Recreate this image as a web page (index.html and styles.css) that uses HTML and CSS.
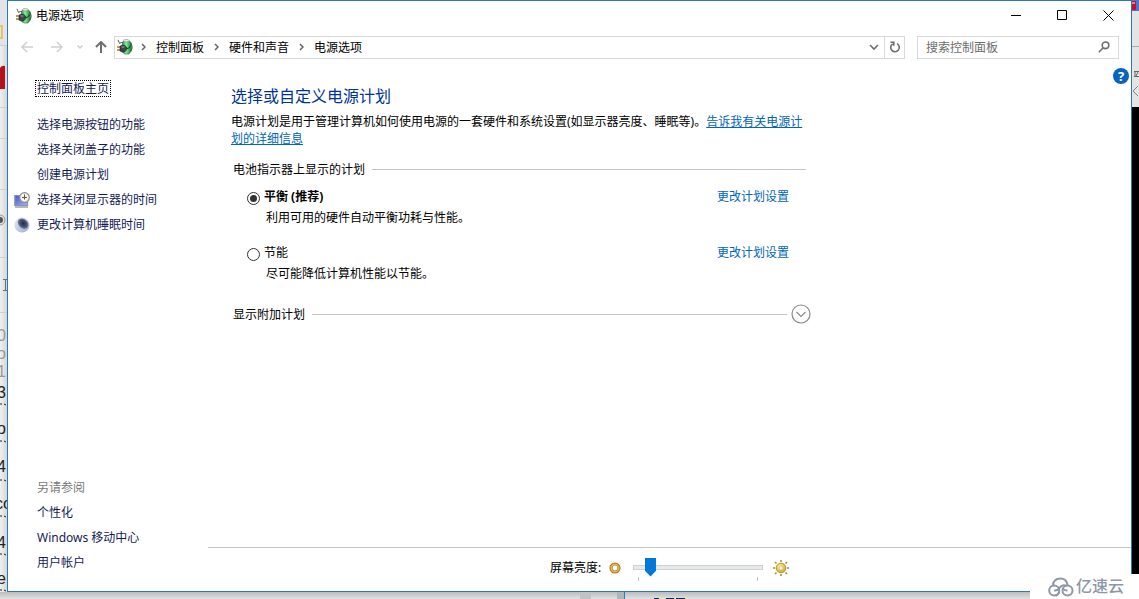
FILE: index.html
```html
<!DOCTYPE html>
<html lang="zh-CN">
<head>
<meta charset="utf-8">
<meta name="viewport" content="width=device-width, initial-scale=1">
<title>电源选项</title>
<link rel="stylesheet" href="styles.css">
</head>
<body>
<svg class="defs" aria-hidden="true">
  <defs>
    <linearGradient id="cell" x1="0" x2="1"><stop offset="0" stop-color="#2c9a4c"/><stop offset=".4" stop-color="#8df09a"/><stop offset="1" stop-color="#1c7a38"/></linearGradient>
    <linearGradient id="screen" x1="0" y1="0" x2="1" y2="1"><stop offset="0" stop-color="#4a55c8"/><stop offset="1" stop-color="#a5b4f4"/></linearGradient>
    <linearGradient id="disc" x1="0" y1="0" x2="1" y2="1"><stop offset="0" stop-color="#e6edf8"/><stop offset="1" stop-color="#9eacd0"/></linearGradient>
    <radialGradient id="moon" cx=".5" cy=".45" r=".55"><stop offset="0" stop-color="#262b45"/><stop offset=".6" stop-color="#4a5273"/><stop offset="1" stop-color="#8b97b8"/></radialGradient>
    <radialGradient id="gold" cx=".4" cy=".35" r=".7"><stop offset="0" stop-color="#fff6a8"/><stop offset="1" stop-color="#c9a227"/></radialGradient>
    <symbol id="power" viewBox="0 0 16 16">
      <path d="M1 .8 2.500 4.500Q4 3 6 3.500" fill="none" stroke="#55605c"/>
      <path d="M5.500 3.500 6.500 2h6l1.800 2v8L12 15H7.500l-2-2z" fill="url(#cell)" stroke="#2c6a40" stroke-width=".6"/>
      <ellipse cx="9.300" cy="1.700" rx="2.900" ry="1.200" fill="#e6eee6" stroke="#6c7b70" stroke-width=".5"/>
      <path d="M13.800 4.500c1.700 2 1.700 5.500 0 7.500" fill="none" stroke="#1f5a30"/>
      <path d="M0 8h4M0 11h4" stroke="#b4713a" stroke-width="1.500"/>
      <path d="M3 7.200 5 6.200h2.500L9.500 8v3l-2 2H5l-2-1z" fill="#3d4744" stroke="#161c1a" stroke-width=".6"/>
      <path d="M4.500 8h3" stroke="#98a39f"/>
      <path d="M9.500 9.500c2.500 0 3.500-1 3.500-3" fill="none" stroke="#14351e"/>
    </symbol>
    <symbol id="chev" viewBox="0 0 5 8"><path d="m1 1 3 3-3 3" fill="none" stroke="#666" stroke-width="1.500"/></symbol>
  </defs>
</svg>
<div class="desktop">
  <div class="stage">
    <svg class="edge edge-left" aria-hidden="true">
      <rect width="7" height="45" fill="#e2e4ea"/>
      <path d="M0 26h2v12H0" fill="none" stroke="#e5bb3e" stroke-width="1.500"/>
      <path d="M0 45.500h7M0 107.500h7M0 138.500h7M0 189.500h7M0 257.500h7M0 312.500h7" stroke="#cfcfcf"/>
      <path d="M0 68q2-3 5-2v23H0z" fill="#b5121b"/>
      <circle cx="0" cy="220" r="5" fill="#ddd" stroke="#999"/><circle cx="0" cy="220" r="3" fill="#555"/>
      <path d="M3 279.500h4M5.500 280v10M3 290.500h4" stroke="#66727c"/>
      <g class="faint"><text x="-3" y="341">0</text><text x="-3" y="359">o</text><text x="-3" y="377">1</text></g>
      <g class="ink"><text x="-3" y="398">3</text><text x="-3" y="434">o</text><text x="-3" y="472">4</text><text x="-5" y="509">co</text><text x="-3" y="548">4</text><text x="-3" y="584">e</text></g>
      <path d="M0 404h2m2 0 2 1M0 441h2m2 0 2 1M0 480h2m2 0 2 1M0 516h2m2 0 2 1M0 554h2m2 0 2 1M0 590h2m2 0 2 1" stroke="#222"/>
    </svg>
    <div class="window">
      <header class="titlebar">
        <svg class="icon16" aria-hidden="true"><use href="#power"/></svg>
        <h1 class="title">电源选项</h1>
        <div class="controls">
          <button class="control" aria-label="最小化"><svg viewBox="0 0 11 11"><path d="M0 5.500h10"/></svg></button>
          <button class="control" aria-label="最大化"><svg viewBox="0 0 11 11"><path d="M.5.500h9v9h-9z"/></svg></button>
          <button class="control" aria-label="关闭"><svg viewBox="0 0 11 11"><path d="m.5.500 10 10m0-10-10 10"/></svg></button>
        </div>
      </header>
      <nav class="navbar" aria-label="地址栏">
        <div class="history">
          <button class="nav-button off" aria-label="后退"><svg viewBox="0 0 12 12"><path d="M12 6H1m5-5L1 6l5 5"/></svg></button>
          <button class="nav-button off" aria-label="前进"><svg viewBox="0 0 12 12"><path d="M0 6h11M6 1l5 5-5 5"/></svg></button>
          <button class="nav-button recent off" aria-label="最近浏览的位置"><svg viewBox="0 0 12 12"><path d="m3.500 4.500 2.500 2.500 2.500-2.500"/></svg></button>
          <button class="nav-button up" aria-label="向上"><svg viewBox="0 0 12 12"><path d="M6 12V1M1 6l5-5 5 5"/></svg></button>
        </div>
        <div class="address">
          <svg class="icon16" aria-hidden="true"><use href="#power"/></svg>
          <svg class="chev" aria-hidden="true"><use href="#chev"/></svg>
          <a class="crumb" href="#">控制面板</a>
          <svg class="chev" aria-hidden="true"><use href="#chev"/></svg>
          <a class="crumb" href="#">硬件和声音</a>
          <svg class="chev" aria-hidden="true"><use href="#chev"/></svg>
          <a class="crumb" href="#">电源选项</a>
          <button class="address-button drop" aria-label="以前的位置"><svg viewBox="0 0 12 12"><path d="m2 4 4 4 4-4"/></svg></button>
          <button class="address-button refresh" aria-label="刷新"><svg viewBox="0 0 12 12"><path d="M8 2.600a4.300 4.300 0 1 1-4.300.2M1.500 1.300h3.300v3.400"/></svg></button>
        </div>
        <div class="search">
          <input class="search-input" type="text" aria-label="搜索控制面板" placeholder="搜索控制面板">
          <svg class="search-icon" viewBox="0 0 12 12" aria-hidden="true"><circle cx="7.500" cy="4.300" r="3.300"/><path d="M5.200 6.700.8 11.200"/></svg>
        </div>
      </nav>
      <div class="body">
        <aside class="sidebar">
          <div class="side-group">
            <a class="side-link home" href="#"><span class="focus">控制面板主页</span></a>
            <a class="side-link" href="#">选择电源按钮的功能</a>
            <a class="side-link" href="#">选择关闭盖子的功能</a>
            <a class="side-link" href="#">创建电源计划</a>
            <a class="side-link with-icon" href="#">
              <svg class="icon16" viewBox="0 0 16 16" aria-hidden="true"><path d="M.8 3.500h12.700v10H.8z" fill="url(#screen)" stroke="#8b93b5" stroke-width="1.200"/><path d="M1 15h13" stroke="#8d9199" stroke-width="1.300"/><circle cx="10.500" cy="5.500" r="4.800" fill="#f4f5ee" stroke="#8a8d86" stroke-width="1.200"/><path d="M10.500 2.500v5M8 5.500h5" fill="none" stroke="#555"/></svg>选择关闭显示器的时间</a>
            <a class="side-link with-icon" href="#">
              <svg class="icon16" viewBox="0 0 16 16" aria-hidden="true"><circle cx="8" cy="8" r="7.600" fill="url(#disc)"/><ellipse cx="9" cy="6.800" rx="6" ry="4.600" transform="rotate(45 9 6.800)" fill="url(#moon)"/></svg>更改计算机睡眠时间</a>
          </div>
          <div class="side-group">
            <h2 class="side-heading">另请参阅</h2>
            <a class="side-link" href="#">个性化</a>
            <a class="side-link" href="#">Windows 移动中心</a>
            <a class="side-link" href="#">用户帐户</a>
          </div>
        </aside>
        <main class="main">
          <div class="scroll">
            <div class="content">
              <h2 class="heading">选择或自定义电源计划</h2>
              <p class="intro">电源计划是用于管理计算机如何使用电源的一套硬件和系统设置(如显示器亮度、睡眠等)。<a class="link underlined" href="#">告诉我有关电源计划的详细信息</a></p>
              <section class="plans">
                <h3 class="legend first">电池指示器上显示的计划</h3>
                <div class="plan">
                  <div class="plan-row">
                    <input class="radio" type="radio" name="plan" id="balanced" checked>
                    <label class="plan-name chosen" for="balanced">平衡 (推荐)</label>
                    <a class="link" href="#">更改计划设置</a>
                  </div>
                  <p class="plan-note">利用可用的硬件自动平衡功耗与性能。</p>
                </div>
                <div class="plan">
                  <div class="plan-row">
                    <input class="radio" type="radio" name="plan" id="saver">
                    <label class="plan-name" for="saver">节能</label>
                    <a class="link" href="#">更改计划设置</a>
                  </div>
                  <p class="plan-note">尽可能降低计算机性能以节能。</p>
                </div>
                <div class="more">
                  <h3 class="legend">显示附加计划</h3>
                  <button class="expand" aria-label="显示附加计划"><svg viewBox="0 0 20 20"><circle cx="10" cy="10" r="9"/><path d="m5.500 8 4.500 4.500L14.500 8"/></svg></button>
                </div>
              </section>
            </div>
            <button class="help" aria-label="帮助">?</button>
          </div>
          <footer class="brightness">
            <label class="bright-label" for="level">屏幕亮度:</label>
            <svg class="dim" viewBox="0 0 12 12" aria-hidden="true"><circle cx="6" cy="6" r="4" fill="#fff" stroke="#b5812a" stroke-width="3.200"/><circle cx="6" cy="6" r="3.600" fill="none" stroke="#e6b955" stroke-width="1.500"/></svg>
            <div class="slider">
              <input class="range" type="range" id="level" min="0" max="100" value="10">
              <div class="ticks"></div>
            </div>
            <svg class="icon16" viewBox="0 0 16 16" aria-hidden="true"><path d="M8 0v2M8 14v2M0 8h2M14 8h2M2 2l1.500 1.500M12.500 12.500 14 14M14 2l-1.500 1.500M3.500 12.500 2 14" stroke="#a08a38" stroke-width="1.500"/><circle cx="8" cy="8" r="4.800" fill="url(#gold)" stroke="#b5952d"/><circle cx="8" cy="8" r="2" fill="#fffce0" stroke="#d8be58" stroke-width=".8"/></svg>
          </footer>
        </main>
      </div>
    </div>
    <svg class="edge edge-right" aria-hidden="true">
      <rect width="7" height="107" fill="#e4e4e4"/>
      <rect width="7" height="11" fill="#4a78c8"/><path d="M0 1h4v9H0z" fill="#c8102e"/><path d="M0 3h3" stroke="#fff"/>
      <path d="M0 46.500h7" stroke="#aaa"/>
      <path d="M2 71.500h5M3 71v5M2 76.500h5M6 72l-2 4" fill="none" stroke="#666"/>
      <path d="m6 86-5 5 5 5" fill="none" stroke="#888"/>
      <rect y="107" width="7" height="467" fill="#000"/>
    </svg>
  </div>
  <svg class="edge-bottom" aria-hidden="true">
    <rect x="580" width="11" height="7" fill="#c2c2c2"/><rect x="617" width="7" height="7" fill="#b4b4b4"/>
    <path d="M624.500 0v7" stroke="#2a7db5"/>
    <path d="M654 6.500h5M666 6.500h8M676 6.500h9" stroke="#1a2466"/>
  </svg>
  <div class="brand">
    <svg class="cloud" viewBox="0 0 26 20" aria-hidden="true"><g fill="none" stroke="#8d97a5" stroke-width="2"><circle cx="6.200" cy="13.500" r="5"/><circle cx="19.500" cy="13.500" r="5"/><path d="M5.200 8.800C4.500 4.500 8 1.500 12.300 1.500c4 0 6.800 2.600 7.200 6.800M6.200 13.500c2.500.4 4-.8 5.300-2.600C13 8.800 15 7.500 18 8.600M11.200 14.500c-.2 2-1.500 3.500-3.500 4.200M19.500 13.500c-2.200.2-3.800-.6-4.800-2"/></g></svg>
    <span class="brand-name">亿速云</span>
  </div>
</div>
</body>
</html>
```
FILE: styles.css
```css
* {
  box-sizing: border-box;
}

body,
h1,
h2,
h3,
p {
  margin: 0;
  font-size: 12px;
  font-weight: 400;
}

body,
button,
input {
  font-family: "Noto Sans", "Noto Sans CJK SC", sans-serif;
  font-size: 12px;
}

body {
  color: #000;
  line-height: 17px;
}

a {
  color: inherit;
  text-decoration: none;
}

button {
  padding: 0;
  border: 0;
  background: none;
}

svg {
  display: block;
  flex: none;
}

.defs {
  position: absolute;
  width: 0;
  height: 0;
}

.desktop {
  position: relative;
  display: flex;
  flex-direction: column;
  min-height: 100vh;
  overflow: hidden;
  background: #dcdcdc;
}

.stage {
  display: flex;
  flex: 1;
}

.edge {
  width: 7px;
  align-self: stretch;
  height: auto;
  background: linear-gradient(90deg, #f0f0f0, #d4d6da);
}

.edge-right {
  background: #fff;
}

.edge text {
  font: 16px "Liberation Sans", sans-serif;
}

.faint {
  fill: #999;
}

.ink {
  fill: #222;
}

.edge-bottom {
  width: 100%;
  height: 7px;
  background: linear-gradient(#bcbcbc, #e2e2e2);
}

.window {
  display: flex;
  flex: 1;
  flex-direction: column;
  min-width: 0;
  border: 1px solid #2a7ab8;
  background: #fff;
}

.icon16 {
  width: 16px;
  height: 16px;
}

/* Title bar */
.titlebar {
  display: flex;
  align-items: center;
  gap: 4px;
  height: 29px;
  padding-left: 8px;
}

.controls {
  display: flex;
  align-self: stretch;
  margin-left: auto;
}

.control {
  display: grid;
  place-items: center;
  width: 46px;
}

.control svg {
  width: 11px;
  height: 11px;
  fill: none;
  stroke: #000;
}

/* Navigation row */
.navbar {
  display: flex;
  align-items: center;
  height: 34px;
  padding: 0 12px 0 4px;
}

.history {
  display: flex;
  flex: none;
  align-items: center;
}

.nav-button {
  display: grid;
  place-items: center;
  width: 30px;
  height: 22px;
}

.nav-button.recent {
  width: 16px;
}

.nav-button.up {
  width: 26px;
}

.nav-button svg {
  width: 12px;
  height: 12px;
  fill: none;
  stroke: #6e6e6e;
  stroke-width: 1.5;
}

.nav-button.up svg {
  stroke-width: 2;
}

.nav-button.off svg {
  stroke: #cfcfcf;
}

.address,
.search {
  display: flex;
  align-items: center;
  height: 23px;
  border: 1px solid #d9d9d9;
}

.address {
  flex: 1;
  gap: 10px;
  padding-left: 2px;
  white-space: nowrap;
}

.address .icon16 {
  margin-right: -2px;
}

.chev {
  width: 5px;
  height: 8px;
}

.address-button {
  display: grid;
  place-items: center;
  align-self: stretch;
  width: 20px;
}

.drop {
  margin-left: auto;
}

.refresh {
  margin-left: -10px;
  border-left: 1px solid #d9d9d9;
}

.address-button svg,
.search-icon {
  width: 12px;
  height: 12px;
  fill: none;
  stroke: #6e6e6e;
  stroke-width: 1.6;
}

.search {
  width: 202px;
  margin-left: 12px;
  padding: 0 8px;
}

.search-input {
  flex: 1;
  min-width: 0;
  padding: 0;
  border: 0;
  outline: 0;
  background: none;
}

.search-input::placeholder {
  color: #6d6d6d;
}

/* Body */
.body {
  display: flex;
  flex: 1;
}

.sidebar {
  display: flex;
  flex-direction: column;
  justify-content: space-between;
  width: 200px;
  padding: 12px 0 16px 29px;
  color: #151c55;
}

.side-group {
  display: flex;
  flex-direction: column;
  align-items: flex-start;
}

.side-link,
.side-heading {
  line-height: 25px;
}

.side-link.home {
  margin-bottom: 11px;
}

.focus {
  display: block;
  margin: 4px 0 4px -2px;
  padding: 0 1px;
  border: 1px dotted #000;
  line-height: 15px;
}

.with-icon {
  display: flex;
  align-items: center;
  gap: 7px;
  margin-left: -23px;
}

.side-heading {
  color: #7a7a7a;
}

.main {
  display: flex;
  flex: 1;
  flex-direction: column;
  min-width: 0;
}

.scroll {
  display: flex;
  flex: 1;
  align-items: flex-start;
  justify-content: space-between;
  padding: 4px 2px 0 23px;
}

.content {
  width: 580px;
  padding-top: 16px;
}

.heading {
  color: #003399;
  font-size: 16px;
  line-height: 24px;
}

.intro {
  margin-top: 5px;
  padding-right: 4px;
}

.link {
  color: #0066bb;
}

.underlined {
  text-decoration: underline;
}

.plans {
  margin-top: 14px;
  padding-left: 2px;
}

.legend {
  display: flex;
  flex: 1;
  align-items: center;
  gap: 7px;
}

.legend::after {
  flex: 1;
  height: 1px;
  background: #c4c4c4;
  content: "";
}

.legend.first {
  margin-right: 5px;
}

.plan {
  padding: 10px 22px 0 14px;
}

.plan + .plan {
  padding-top: 18px;
}

.plan-row {
  display: flex;
  align-items: center;
  gap: 4px;
}

.radio {
  display: grid;
  place-items: center;
  width: 13px;
  height: 13px;
  margin: 4px 0 0;
  border: 1px solid #333;
  border-radius: 50%;
  appearance: none;
}

.radio:checked::before {
  width: 7px;
  height: 7px;
  border-radius: 50%;
  background: #333;
  content: "";
}

.plan-name {
  margin-right: auto;
}

.chosen {
  font-weight: 700;
}

.plan-note {
  margin-top: 4px;
  padding-left: 19px;
}

.more {
  display: flex;
  align-items: center;
  gap: 4px;
  margin-top: 22px;
}

.expand svg {
  width: 20px;
  height: 20px;
  fill: none;
  stroke: #8a8a8a;
  stroke-width: 1.2;
}

.help {
  width: 16px;
  height: 16px;
  border-radius: 50%;
  background: #0963bd;
  color: #fff;
  font-size: 13px;
  font-weight: 700;
  line-height: 16px;
}

/* Brightness bar */
.brightness {
  display: flex;
  align-items: center;
  justify-content: center;
  height: 44px;
  padding-bottom: 4px;
  border-top: 1px solid #c4c4c4;
}

.dim {
  width: 12px;
  height: 12px;
  margin: 0 12px 0 8px;
}

.slider {
  width: 130px;
  height: 24px;
  margin: 3px 10px 0 0;
}

.range {
  display: block;
  width: 100%;
  height: 20px;
  margin: 0;
  background: linear-gradient(#e7eaea, #e7eaea) center / calc(100% - 2px) 3px no-repeat, linear-gradient(#d0d0d0, #d0d0d0) center / 100% 5px no-repeat;
  appearance: none;
}

.range::-webkit-slider-thumb {
  width: 11px;
  height: 19px;
  background: #0078d7;
  clip-path: polygon(0 0, 100% 0, 100% 70%, 50% 100%, 0 70%);
  appearance: none;
}

.ticks {
  height: 4px;
  margin: 0 5px;
  border: solid #c4c4c4;
  border-width: 0 1px;
}

/* Corner mark */
.brand {
  position: absolute;
  right: 0;
  bottom: 0;
  display: flex;
  align-items: center;
  gap: 2px;
  width: 109px;
  height: 25px;
  padding-left: 18px;
  background: #fff;
}

.cloud {
  width: 26px;
  height: 20px;
}

.brand-name {
  color: #8d97a5;
  font-size: 16px;
  font-weight: 500;
}
```
